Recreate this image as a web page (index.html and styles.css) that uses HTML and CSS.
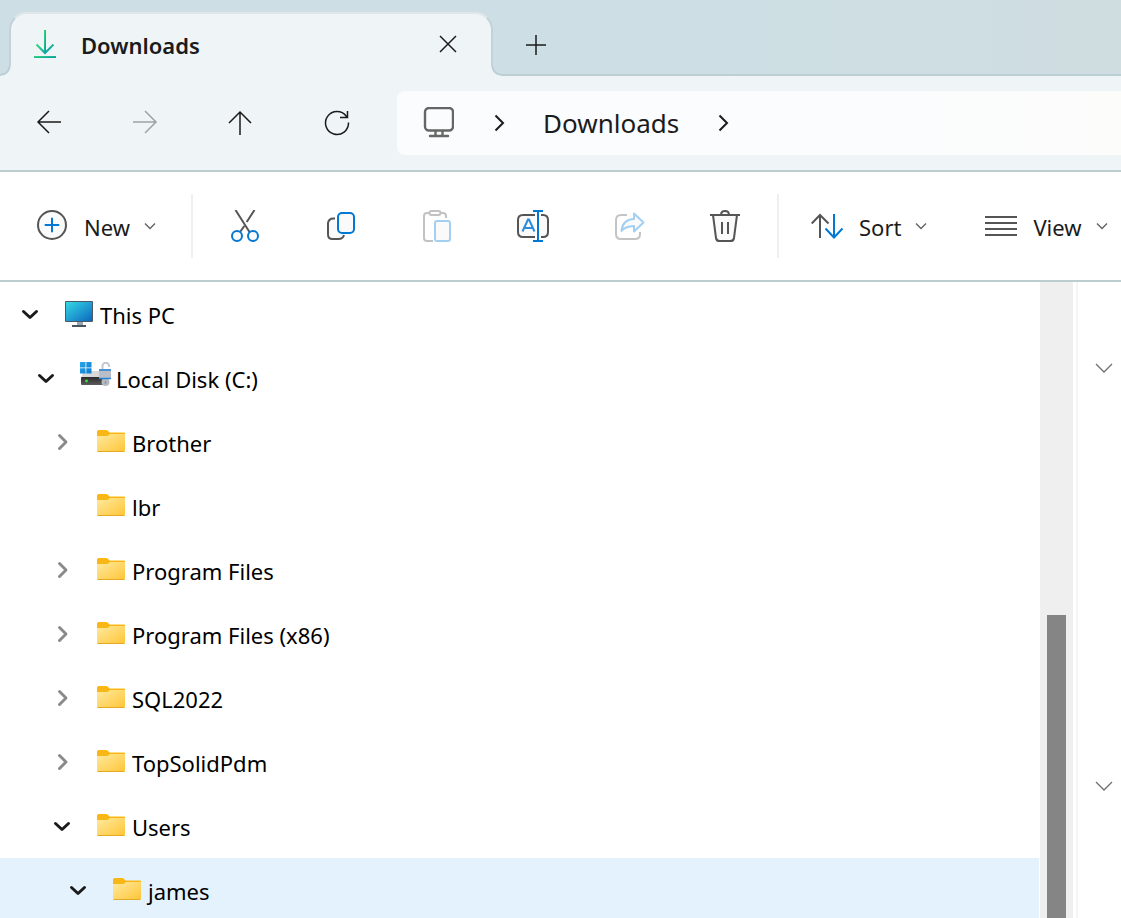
FILE: index.html
```
<!DOCTYPE html>
<html lang="en">
<head>
<meta charset="utf-8">
<title>Downloads</title>
<link rel="stylesheet" href="styles.css">
</head>
<body>
<svg class="defs" aria-hidden="true">
  <defs>
    <linearGradient id="green" x1="0" y1="0" x2="1" y2="1"><stop offset="0.2" stop-color="#2fd07f"/><stop offset="0.75" stop-color="#0fa3a8"/></linearGradient>
    <linearGradient id="screen" x1="0" y1="0" x2="1" y2="1"><stop offset="0" stop-color="#35d8e6"/><stop offset="1" stop-color="#0c68be"/></linearGradient>
    <linearGradient id="paper" x1="0" y1="0" x2="1" y2="1"><stop offset="0" stop-color="#ffe9a0"/><stop offset="1" stop-color="#ffc637"/></linearGradient>
    <linearGradient id="drive" x1="0" y1="0" x2="0" y2="1"><stop offset="0" stop-color="#2b2b2b"/><stop offset="1" stop-color="#5c5c5c"/></linearGradient>
    <linearGradient id="win" x1="0" y1="0" x2="1" y2="1"><stop offset="0" stop-color="#2aa8ea"/><stop offset="1" stop-color="#0a7ad0"/></linearGradient>
    <symbol id="folder" viewBox="0 0 32 32">
      <path d="M1 5.500q0-1.500 1.500-1.500h7.500q1 0 1.700.6L13.500 6.500H28q1 0 1 1V16H1z" fill="#f9b716"/>
      <path d="M1 10h9.500q1 0 1.700-.6L14 8h15v16.500q0 1-1 1H2q-1 0-1-1z" fill="url(#paper)"/>
      <path d="M1.500 25.500h27" stroke="#e5a823"/>
    </symbol>
    <symbol id="open" viewBox="0 0 20 20"><path d="M3.500 7.500 10 13.500 16.500 7.500" fill="none" stroke="#1b1b1b" stroke-width="3" stroke-linecap="round" stroke-linejoin="round"/></symbol>
    <symbol id="closed" viewBox="0 0 20 20"><path d="M7.500 3.500 14 10 7.500 16.500" fill="none" stroke="#8a8a8a" stroke-width="2.900" stroke-linecap="round" stroke-linejoin="round"/></symbol>
    <symbol id="caret" viewBox="0 0 12 12"><path d="M1 3.500 6 8.500 11 3.500" fill="none" stroke="#606060" stroke-width="1.300"/></symbol>
    <symbol id="next" viewBox="0 0 20 20"><path d="M6.500 2.500 14 10 6.500 17.500" fill="none" stroke="#1b1b1b" stroke-width="2"/></symbol>
    <symbol id="group" viewBox="0 0 18 18"><path d="M1 5 9 13 17 5" fill="none" stroke="#707070" stroke-width="1.300"/></symbol>
  </defs>
</svg>

<header class="tabs">
  <div class="tab">
    <svg class="icon" viewBox="0 0 32 32"><g fill="none" stroke="url(#green)" stroke-width="2"><path d="M7.500 15.500 16 24 24.500 15.500"/></g><path d="M15 1h2v22l-1 1-1-1z" fill="url(#green)"/><path d="M5 27h22v2H5z" fill="url(#green)"/></svg>
    <span class="tab-title">Downloads</span>
    <button class="plain" aria-label="Close tab"><svg class="icon" viewBox="0 0 32 32"><path d="M8 7 24 23M24 7 8 23" stroke="#1b1b1b" stroke-width="1.500"/></svg></button>
  </div>
  <button class="plain add" aria-label="New tab"><svg class="icon" viewBox="0 0 32 32"><path d="M16 7v20M6 17h20" stroke="#1b1b1b" stroke-width="1.500"/></svg></button>
</header>

<nav class="nav">
  <button class="plain step" aria-label="Back"><svg class="icon" viewBox="0 0 32 32"><path d="M28 16H5M16 5 5 16 16 27" fill="none" stroke="#1b1b1b" stroke-width="1.500"/></svg></button>
  <button class="plain step" aria-label="Forward" disabled><svg class="icon" viewBox="0 0 32 32"><path d="M4 16H27M16 5 27 16 16 27" fill="none" stroke="#a0a3a5" stroke-width="1.500"/></svg></button>
  <button class="plain step" aria-label="Up"><svg class="icon" viewBox="0 0 32 32"><path d="M15 29V6M4 17 15 6 26 17" fill="none" stroke="#1b1b1b" stroke-width="1.500"/></svg></button>
  <button class="plain step" aria-label="Refresh"><svg class="icon" viewBox="0 0 32 32"><path d="M27.500 16.500a11.500 11.500 0 1 1-2.200-6.300L26 11.500M26.500 5v6.500h-7.500" fill="none" stroke="#1b1b1b" stroke-width="1.500"/></svg></button>
  <div class="address">
    <button class="plain" aria-label="This PC"><svg class="icon" viewBox="0 0 32 32"><g fill="none" stroke="#666" stroke-width="2.400"><rect x="3" y="1" width="28" height="22.500" rx="4"/><path d="M13.500 24v4M20.500 24v4M8 29h18" stroke-linecap="round"/></g></svg></button>
    <svg class="small" viewBox="0 0 20 20"><use href="#next"/></svg>
    <button class="plain crumb">Downloads</button>
    <svg class="small last" viewBox="0 0 20 20"><use href="#next"/></svg>
  </div>
</nav>

<div class="tools" role="toolbar" aria-label="Commands">
  <button class="plain command new"><svg class="icon" viewBox="0 0 32 32"><circle cx="16" cy="15" r="14" fill="#fafafa" stroke="#555" stroke-width="2"/><path d="M16 8.500v13M9.500 15h13" stroke="#0078d4" stroke-width="2" stroke-linecap="round"/></svg><span>New</span><svg class="caret"><use href="#caret"/></svg></button>
  <span class="rule"></span>
  <button class="plain tool" aria-label="Cut"><svg class="icon" viewBox="0 0 32 32"><path d="M6.500 0 20.500 22M25.500 0 17.700 12M15.300 16 11 22" stroke="#555" stroke-width="2"/><g fill="#fafafa" stroke="#0078d4" stroke-width="2"><circle cx="8" cy="26" r="5"/><circle cx="24" cy="26" r="5"/></g></svg></button>
  <button class="plain tool" aria-label="Copy"><svg class="icon" viewBox="0 0 32 32"><path d="M10 8.500H8.500A5 5 0 0 0 3 13v11.500Q3 29 7.500 29h6q4.500 0 5.500-4" fill="#fafafa" stroke="#555" stroke-width="2"/><rect x="13" y="3" width="16" height="20" rx="4" fill="#fafafa" stroke="#0078d4" stroke-width="2"/></svg></button>
  <button class="plain tool" aria-label="Paste" disabled><svg class="icon" viewBox="0 0 32 32"><g fill="none" stroke="#c2c2c2" stroke-width="2"><path d="M12 31H6q-3 0-3-3V6q0-3 3-3h3M19 3h3q3 0 3 3v2"/><rect x="8.500" y="1" width="11" height="4" rx="2"/></g><rect x="14" y="11" width="15" height="20" rx="2" fill="#fafafa" stroke="#a3d0f2" stroke-width="2"/></svg></button>
  <button class="plain tool" aria-label="Rename"><svg class="icon" viewBox="0 0 32 32"><path d="M18 5H6Q1 5 1 10v12q0 5 5 5h12M24 5h2q5 0 5 5v12q0 5-5 5h-2" fill="#fafafa" stroke="#555" stroke-width="2"/><path d="M5.500 21.500 11 9.500h1L17.500 21.500M8 18h7.500" fill="none" stroke="#2b8cdc" stroke-width="2"/><path d="M21 1v30M16 1h10M16 31h10" stroke="#0078d4" stroke-width="2"/></svg></button>
  <button class="plain tool" aria-label="Share" disabled><svg class="icon" viewBox="0 0 32 32"><path d="M14 5H8Q3 5 3 10v14q0 5 5 5h14q5 0 5-5v-2" fill="none" stroke="#c4c4c4" stroke-width="2"/><path d="M21 3.500 30.500 12.500 21 21.500V16Q12 16.500 8.500 21 9.500 9.500 21 9z" fill="#fafafa" stroke="#a3d0f2" stroke-width="2" stroke-linejoin="round"/></svg></button>
  <button class="plain tool" aria-label="Delete"><svg class="icon" viewBox="0 0 32 32"><path d="M4 5 7 28q.4 3 3.500 3h11q3.100 0 3.500-3L28 5z" fill="#fafafa"/><g fill="none" stroke="#555" stroke-width="2"><path d="M1 5h30M4 5 7 28q.4 3 3.500 3h11q3.100 0 3.500-3L28 5M12 5q0-4 4-4t4 4M13 12v12M19 12v12"/></g></svg></button>
  <span class="rule end"></span>
  <button class="plain command"><svg class="icon" viewBox="0 0 32 32"><path d="M9 28V5M.700 13.500 9 5 17.500 13.500" fill="none" stroke="#555" stroke-width="2"/><path d="M23 4v23.500M14.500 18.500 23 27.500 31.500 18.500" fill="none" stroke="#0078d4" stroke-width="2"/></svg><span>Sort</span><svg class="caret"><use href="#caret"/></svg></button>
  <button class="plain command view"><svg class="icon" viewBox="0 0 32 32"><path d="M0 7h32M0 13h32M0 19h32M0 25h32" stroke="#555" stroke-width="2"/></svg><span>View</span><svg class="caret"><use href="#caret"/></svg></button>
</div>

<main class="body">
  <ul class="tree">
    <li class="row"><button class="plain" aria-label="Collapse"><svg class="small"><use href="#open"/></svg></button><svg class="icon" viewBox="0 0 32 32"><path d="M13 23h6v5h-6z" fill="#9aa5ae"/><path d="M8 27h14v2H8z" fill="#4a545c"/><rect x="1" y="3" width="28" height="21" rx="1" fill="#4a5a66"/><rect x="2" y="4" width="26" height="19" fill="url(#screen)"/></svg><span>This PC</span></li>
    <li class="row l1"><button class="plain" aria-label="Collapse"><svg class="small"><use href="#open"/></svg></button><svg class="icon" viewBox="0 0 32 32"><path d="M4 9h19l5 7H1z" fill="#d8d8d8"/><rect x="1" y="15" width="27" height="8" rx="1" fill="url(#drive)"/><circle cx="6.500" cy="19" r="1.400" fill="#3be03b"/><path d="M0 0h5.500v5.500H0zM6.300 0h5.200v5.500H6.300zM0 6.300h5.500v5.200H0zM6.300 6.300h5.200v5.200H6.300z" fill="url(#win)"/><path d="M22.500 9V3.500a3.300 3.300 0 0 1 6.500 0V5" fill="none" stroke="#c3c8d0" stroke-width="2"/><circle cx="25.500" cy="20" r="4" fill="#b4b9c2"/><rect x="19" y="7" width="12" height="10" rx="1" fill="#b9bec7"/><path d="M19 8h12M19 16.500h12" stroke="#2584dc" stroke-width="1.600"/><path d="M25.500 19v3" stroke="#9298a2" stroke-width="1.500"/></svg><span>Local Disk (C:)</span></li>
    <li class="row l2"><button class="plain" aria-label="Expand"><svg class="small"><use href="#closed"/></svg></button><svg class="icon"><use href="#folder"/></svg><span>Brother</span></li>
    <li class="row l2"><span class="small"></span><svg class="icon"><use href="#folder"/></svg><span>lbr</span></li>
    <li class="row l2"><button class="plain" aria-label="Expand"><svg class="small"><use href="#closed"/></svg></button><svg class="icon"><use href="#folder"/></svg><span>Program Files</span></li>
    <li class="row l2"><button class="plain" aria-label="Expand"><svg class="small"><use href="#closed"/></svg></button><svg class="icon"><use href="#folder"/></svg><span>Program Files (x86)</span></li>
    <li class="row l2"><button class="plain" aria-label="Expand"><svg class="small"><use href="#closed"/></svg></button><svg class="icon"><use href="#folder"/></svg><span>SQL2022</span></li>
    <li class="row l2"><button class="plain" aria-label="Expand"><svg class="small"><use href="#closed"/></svg></button><svg class="icon"><use href="#folder"/></svg><span>TopSolidPdm</span></li>
    <li class="row l2"><button class="plain" aria-label="Collapse"><svg class="small"><use href="#open"/></svg></button><svg class="icon"><use href="#folder"/></svg><span>Users</span></li>
    <li class="row l3 selected"><button class="plain" aria-label="Collapse"><svg class="small"><use href="#open"/></svg></button><svg class="icon"><use href="#folder"/></svg><span>james</span></li>
  </ul>
  <div class="track"><div class="thumb"></div></div>
  <section class="files">
    <button class="plain" aria-label="Collapse first group"><svg class="group"><use href="#group"/></svg></button>
    <button class="plain" aria-label="Collapse second group"><svg class="group"><use href="#group"/></svg></button>
  </section>
</main>
</body>
</html>
```
FILE: styles.css
```
* { box-sizing: border-box; }
body {
  margin: 0;
  height: 100vh;
  overflow: hidden;
  display: flex;
  flex-direction: column;
  background: #fff;
  color: #1b1b1b;
  font-family: "Noto Sans", "Open Sans", sans-serif;
  font-size: 22px;
}
.defs { position: absolute; width: 0; height: 0; }
svg { display: block; flex: none; }
.icon { width: 32px; height: 32px; }
.small { width: 20px; height: 20px; flex: none; }
.caret { width: 12px; height: 12px; }
.group { width: 18px; height: 18px; }
.plain {
  display: flex;
  align-items: center;
  padding: 0;
  border: 0;
  background: none;
  color: inherit;
  font: inherit;
  white-space: nowrap;
}

.tabs {
  flex: none;
  display: flex;
  height: 76px;
  padding: 12px 0 0 9px;
  background: linear-gradient(#bccfd5, #bccfd5) bottom / 100% 2px no-repeat, linear-gradient(90deg, #cddfe5 60%, #cfdde0);
}
.tab {
  position: relative;
  display: flex;
  align-items: center;
  width: 484px;
  padding: 0 27px 0 18px;
  border: 2px solid #c1d3d9;
  border-top-color: #dfe7ea;
  border-bottom: 0;
  border-radius: 18px 18px 0 0;
  background: #eff4f7;
}
.tab::before,
.tab::after {
  content: "";
  position: absolute;
  bottom: 0;
  width: 10px;
  height: 10px;
}
.tab::before { left: -10px; background: radial-gradient(circle at 0 0, #cddfe5 7px, #bccfd5 8px, #bccfd5 9px, #eff4f7 10px); }
.tab::after { right: -10px; background: radial-gradient(circle at 100% 0, #cddfe5 7px, #bccfd5 8px, #bccfd5 9px, #eff4f7 10px); }
.tab-title { flex: 1; margin-left: 20px; font-weight: 600; }
.add { margin-left: 27px; }

.nav {
  flex: none;
  display: flex;
  align-items: center;
  height: 96px;
  padding-left: 1px;
  border-bottom: 2px solid #bccdcf;
  background: #eff4f7;
}
.step { width: 96px; height: 64px; padding-bottom: 2px; justify-content: center; }
.address {
  flex: 1;
  display: flex;
  align-items: center;
  height: 64px;
  margin-left: 12px;
  padding-left: 25px;
  border-radius: 8px 0 0 8px;
  background: linear-gradient(90deg, #fbfcfe 60%, #fcfcfb);
}
.address > .small { margin-left: 35px; }
.address > .last { margin-left: 34px; }
.crumb { margin-left: 34px; font-size: 26px; }

.tools {
  flex: none;
  display: flex;
  align-items: center;
  height: 110px;
  border-bottom: 2px solid #bccdcf;
  background: #fff;
}
.command { gap: 14px; height: 64px; padding-left: 32px; }
.command span { margin-left: 2px; padding-top: 2px; }
.new { width: 191px; padding-left: 36px; }
.view { padding-left: 58px; }
.rule { width: 2px; height: 64px; margin-right: 4px; background: #efefef; }
.end { margin: 0 0 0 4px; }
.tool { width: 96px; height: 64px; justify-content: center; }

.body { flex: 1; min-height: 0; display: flex; }
.tree {
  flex: 1;
  margin: 0 1px 0 0;
  padding: 0;
  list-style: none;
  overflow: hidden;
  color: #000;
}
.row { display: flex; align-items: center; height: 64px; padding-left: 20px; }
.row > span { padding-top: 2px; }
.row .icon { margin: 0 4px 0 24px; }
.l1 { padding-left: 36px; }
.l2 { padding-left: 52px; }
.l3 { padding-left: 68px; }
.selected { background: #e4f2fd; }
.track { width: 33px; padding: 333px 7px 0; background: #efefef; }
.thumb { height: 100%; background: #858585; }
.files {
  width: 45px;
  margin-left: 3px;
  padding: 77px 0 0 17px;
  border-left: 2px solid #f5f5f5;
}
.files button + button { margin-top: 400px; }
```
